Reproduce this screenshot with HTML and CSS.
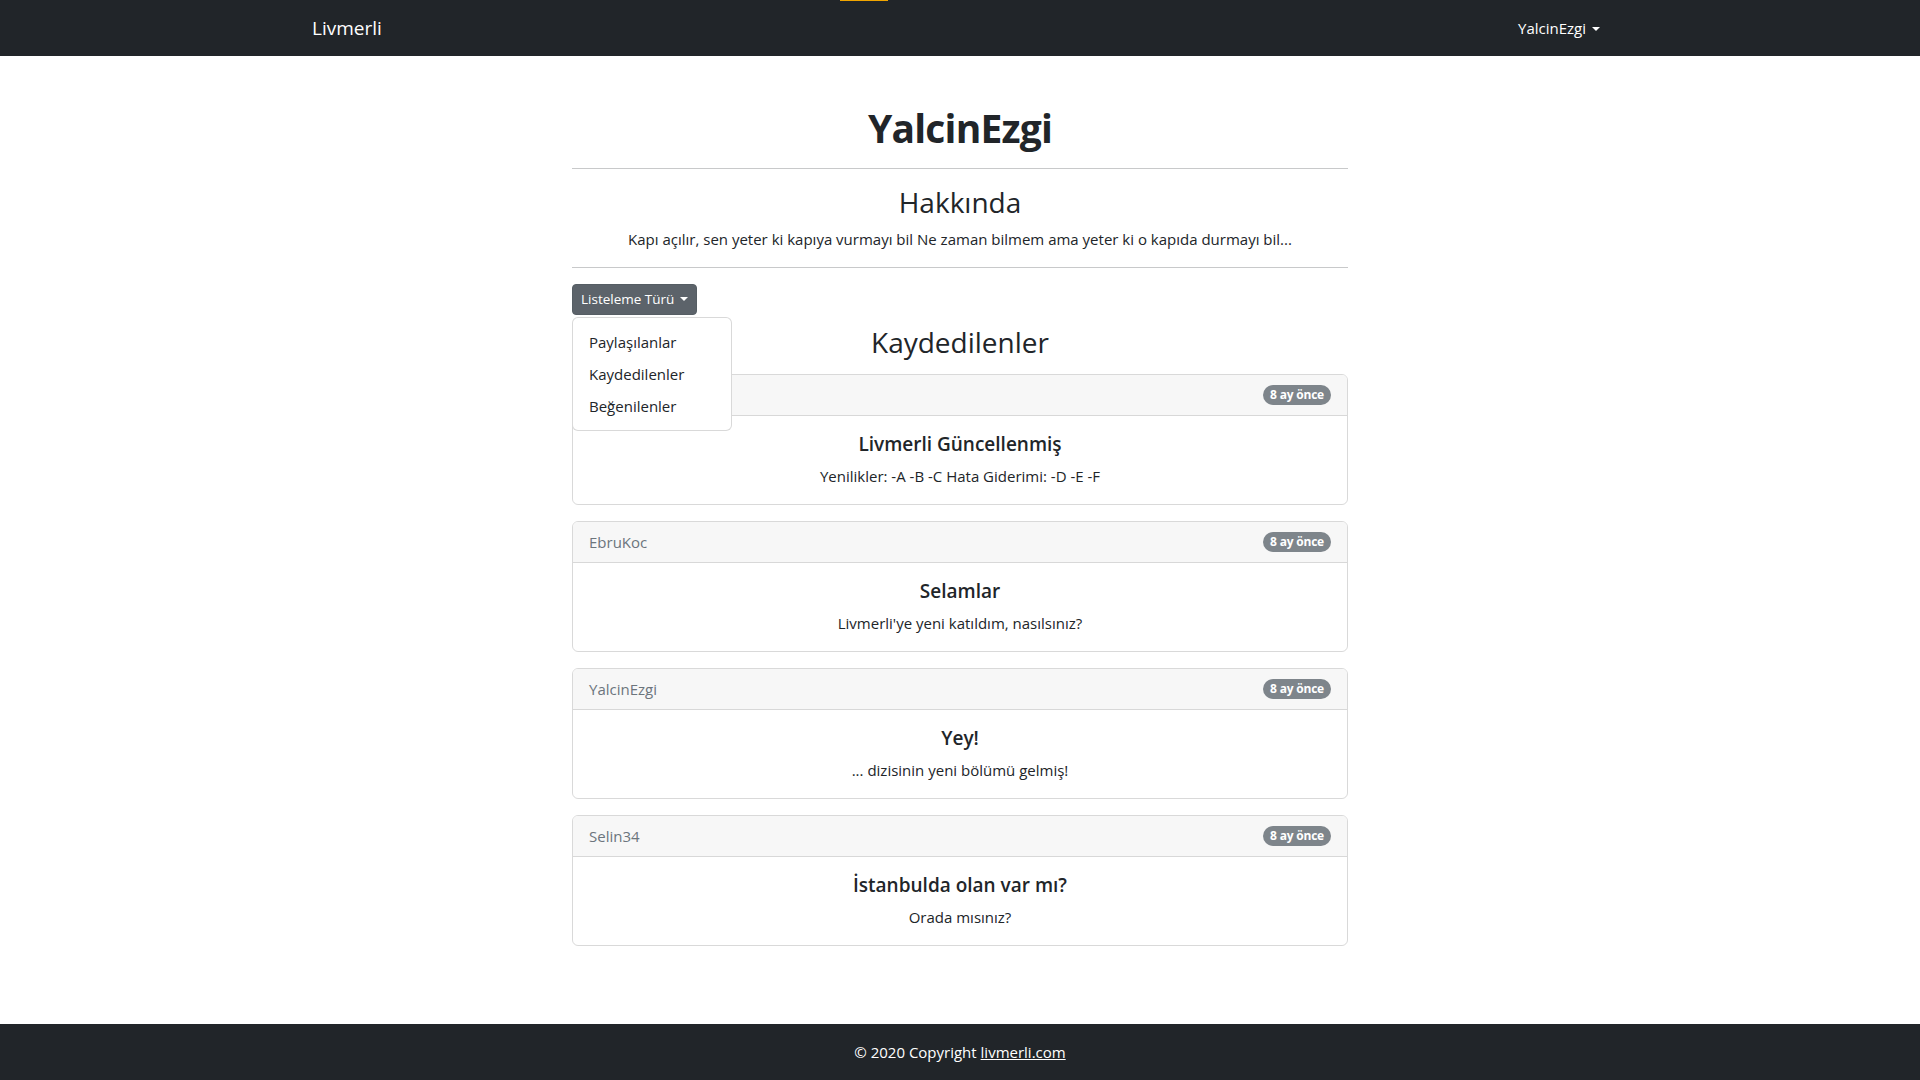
FILE: index.html
```html
<!DOCTYPE html>
<html lang="tr">
<head>
<meta charset="utf-8">
<title>YalcinEzgi - Livmerli</title>
<link rel="stylesheet" href="styles.css">
</head>
<body>
<div class="progress"><div class="progress-bar"></div></div>
<nav class="navbar">
  <div class="nav-inner">
    <a class="brand" href="#">Livmerli</a>
    <a class="nav-user" href="#">YalcinEzgi<span class="caret"></span></a>
  </div>
</nav>
<main class="main">
  <h1 class="profile-name">YalcinEzgi</h1>
  <hr class="divider">
  <h3 class="section-title">Hakkında</h3>
  <p class="about">Kapı açılır, sen yeter ki kapıya vurmayı bil Ne zaman bilmem ama yeter ki o kapıda durmayı bil...</p>
  <hr class="divider">
  <div class="dropdown">
    <button class="btn-list">Listeleme Türü<span class="caret"></span></button>
    <ul class="dropdown-menu">
      <li><a class="dropdown-item" href="#">Paylaşılanlar</a></li>
      <li><a class="dropdown-item" href="#">Kaydedilenler</a></li>
      <li><a class="dropdown-item" href="#">Beğenilenler</a></li>
    </ul>
  </div>
  <h3 class="list-title">Kaydedilenler</h3>
  <div class="card">
    <div class="card-header"><span class="author">YalcinEzgi</span><span class="badge">8 ay önce</span></div>
    <div class="card-body"><h5 class="card-title">Livmerli Güncellenmiş</h5><p class="card-text">Yenilikler: -A -B -C Hata Giderimi: -D -E -F</p></div>
  </div>
  <div class="card">
    <div class="card-header"><span class="author">EbruKoc</span><span class="badge">8 ay önce</span></div>
    <div class="card-body"><h5 class="card-title">Selamlar</h5><p class="card-text">Livmerli'ye yeni katıldım, nasılsınız?</p></div>
  </div>
  <div class="card">
    <div class="card-header"><span class="author">YalcinEzgi</span><span class="badge">8 ay önce</span></div>
    <div class="card-body"><h5 class="card-title">Yey!</h5><p class="card-text">... dizisinin yeni bölümü gelmiş!</p></div>
  </div>
  <div class="card">
    <div class="card-header"><span class="author">Selin34</span><span class="badge">8 ay önce</span></div>
    <div class="card-body"><h5 class="card-title">İstanbulda olan var mı?</h5><p class="card-text">Orada mısınız?</p></div>
  </div>
</main>
<footer class="footer">© 2020 Copyright <a href="#">livmerli.com</a></footer>
</body>
</html>
```
FILE: styles.css
```css
* { box-sizing: border-box; }
html, body { margin: 0; }
body {
  font-family: "Open Sans", "Noto Sans", sans-serif;
  font-size: 16px;
  line-height: 1.5;
  color: #212529;
  background: #fff;
  min-height: 100vh;
  display: flex;
  flex-direction: column;
}
a { color: inherit; text-decoration: none; }
.progress {
  position: fixed;
  top: 0; left: 0; right: 0;
  height: 1px;
  z-index: 10;
}
.progress-bar {
  position: absolute;
  left: 840px;
  width: 48px;
  top: 0;
  height: 1px;
  background: #f0a500;
}
.navbar {
  background: #212529;
  height: 56px;
  display: flex;
  align-items: center;
}
.nav-inner {
  width: 1320px;
  margin: 0 auto;
  padding: 0 12px;
  display: flex;
  justify-content: space-between;
  align-items: center;
}
.brand {
  color: #fff;
  font-size: 19px;
  line-height: 30px;
  padding: 5px 0;
}
.nav-user {
  color: #fff;
  padding: 8px;
  font-size: 15px;
  line-height: 24px;
}
.caret {
  display: inline-block;
  margin-left: 0.4em;
  vertical-align: 0.2em;
  border-top: 0.3em solid;
  border-right: 0.3em solid transparent;
  border-left: 0.3em solid transparent;
  border-bottom: 0;
}
.main {
  width: 776px;
  margin: 48px auto 0;
  padding-bottom: 60px;
}
.profile-name {
  margin: 0 0 16px;
  font-size: 39px;
  line-height: 48px;
  font-weight: 700;
  letter-spacing: -0.8px;
  text-align: center;
}
.divider {
  margin: 0;
  border: 0;
  border-top: 1px solid #c8c9ca;
}
.section-title {
  margin: 16px 0 8px;
  font-size: 28px;
  line-height: 34px;
  font-weight: 500;
  text-align: center;
}
.about {
  margin: 0 0 16px;
  text-align: center;
  font-size: 15px;
  line-height: 24px;
}
.dropdown {
  position: relative;
  margin-top: 16px;
}
.btn-list {
  font-family: inherit;
  font-size: 13.5px;
  line-height: 21px;
  color: #fff;
  background: #5c636a;
  border: 1px solid #565e64;
  border-radius: 4px;
  padding: 4px 8px;
  cursor: pointer;
}
.dropdown-menu {
  position: absolute;
  top: 33px;
  left: 0;
  z-index: 5;
  min-width: 160px;
  margin: 0;
  padding: 8px 0;
  list-style: none;
  background: #fff;
  border: 1px solid rgba(0,0,0,.15);
  border-radius: 6px;
}
.dropdown-item {
  display: block;
  padding: 4px 16px;
  line-height: 24px;
  font-size: 15px;
  color: #212529;
}
.list-title {
  margin: 10px 0 15px;
  font-size: 28px;
  line-height: 34px;
  font-weight: 500;
  text-align: center;
}
.card {
  border: 1px solid rgba(0,0,0,.15);
  border-radius: 6px;
  margin-bottom: 16px;
  overflow: hidden;
}
.card-header {
  background: #f7f7f7;
  border-bottom: 1px solid rgba(0,0,0,.125);
  padding: 8px 16px;
  display: flex;
  justify-content: space-between;
  align-items: center;
  height: 41px;
}
.author {
  color: #6c757d;
  font-size: 15px;
}
.badge {
  background: #7e858b;
  color: #fff;
  font-size: 12px;
  font-weight: 700;
  line-height: 1;
  padding: 4px 7px;
  border-radius: 10px;
  letter-spacing: -0.2px;
}
.card-body {
  padding: 16px;
  text-align: center;
}
.card-title {
  margin: 0 0 8px;
  font-size: 19px;
  line-height: 24px;
  font-weight: 600;
}
.card-text {
  margin: 0;
  font-size: 15px;
  line-height: 24px;
}
.footer {
  margin-top: auto;
  background: #212529;
  color: #fff;
  text-align: center;
  height: 56px;
  line-height: 24px;
  padding: 16px;
  font-size: 15px;
}
.footer a { text-decoration: underline; color: #fff; }
```
